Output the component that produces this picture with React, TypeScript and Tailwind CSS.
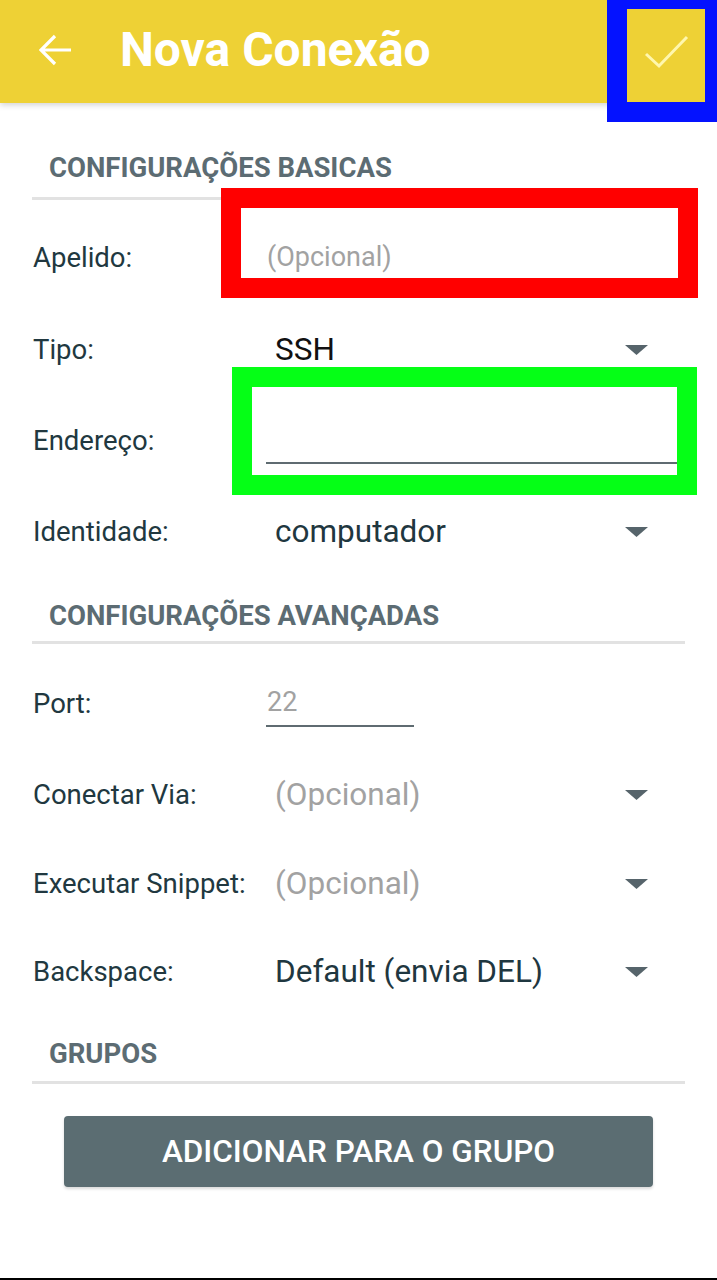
import React from "react";

const font = { fontFamily: "Roboto, 'Liberation Sans', sans-serif" };

// small dropdown triangle used by the spinners
const Caret = () => (
  <svg width="23" height="10" viewBox="0 0 23 10" className="shrink-0">
    <path d="M0 0 L23 0 L11.5 10 Z" fill="#56646b" />
  </svg>
);

const SectionTitle = ({ children, className }: { children: React.ReactNode; className?: string }) => (
  <div className={className}>
    <div className="pl-[49px] text-[27.5px] leading-[30px] font-bold text-[#5c6c73]">{children}</div>
  </div>
);

const Divider = ({ className }: { className?: string }) => (
  <div className={"mx-[32px] h-[3px] bg-[#e2e2e2] " + (className ?? "")} />
);

const Row = ({
  label,
  height,
  children,
}: {
  label: string;
  height: string;
  children: React.ReactNode;
}) => (
  <div className={"flex items-center pl-[33px] pr-[32px] " + height}>
    <div className="w-[233px] shrink-0 text-[27.5px] text-[#213840]">{label}</div>
    <div className="flex-1 h-full flex items-center">{children}</div>
  </div>
);

const Spinner = ({ value, muted, dark }: { value: string; muted?: boolean; dark?: boolean }) => (
  <div className="flex-1 flex items-center justify-between pl-[9px] pr-[37px]">
    <span
      className={
        "text-[31.5px] leading-none " +
        (muted ? "text-[#a2a2a2]" : dark ? "text-[#111111]" : "text-[#1f3740]")
      }
    >
      {value}
    </span>
    <Caret />
  </div>
);

export default function App() {
  return (
    <div className="relative w-[717px] h-[1280px] overflow-hidden bg-white" style={font}>
      {/* toolbar */}
      <header className="relative z-10 h-[103px] bg-[#eed135] flex items-center shadow-[0_2px_6px_rgba(0,0,0,0.18)]">
        <svg width="34" height="32" viewBox="0 0 34 32" className="ml-[39px] mb-[4px]">
          <path d="M32 16 H3 M16 2 L2 16 L16 30" fill="none" stroke="#fff" strokeWidth="3.2" />
        </svg>
        <h1 className="ml-[47px] mb-[4px] text-[48px] font-bold text-white leading-none">Nova Conexão</h1>
        <div className="ml-auto w-[78px] h-full flex items-center justify-center mr-[12px]">
          <svg width="48" height="38" viewBox="0 0 48 38">
            <path d="M4 21 L17 33 L45 4" fill="none" stroke="#fff7ad" strokeWidth="3" />
          </svg>
        </div>
      </header>

      <SectionTitle className="pt-[50px]">CONFIGURAÇÕES BASICAS</SectionTitle>
      <Divider className="mt-[14px]" />

      <div className="pt-[12px]">
        <Row label="Apelido:" height="h-[92px]">
          <div className="flex-1 h-[46px] border-b border-[#c8c8c8] flex items-center">
            <span className="pl-[1px] text-[27px] text-[#a2a2a2]">(Opcional)</span>
          </div>
        </Row>
        <Row label="Tipo:" height="h-[91px]">
          <Spinner value="SSH" dark />
        </Row>
        <Row label="Endereço:" height="h-[91px]">
          <div className="flex-1 h-[46px] border-b-2 border-[#5f6b71]" />
        </Row>
        <Row label="Identidade:" height="h-[91px]">
          <Spinner value="computador" />
        </Row>
      </div>

      <SectionTitle className="pt-[24px]">CONFIGURAÇÕES AVANÇADAS</SectionTitle>
      <Divider className="mt-[10px]" />

      <div className="pt-[14px]">
        <Row label="Port:" height="h-[91px]">
          <div className="w-[148px] h-[46px] border-b-2 border-[#5f6b71] flex items-center">
            <span className="pl-[1px] text-[27px] text-[#a2a2a2]">22</span>
          </div>
        </Row>
        <Row label="Conectar Via:" height="h-[91px]">
          <Spinner value="(Opcional)" muted />
        </Row>
        <Row label="Executar Snippet:" height="h-[88px]">
          <Spinner value="(Opcional)" muted />
        </Row>
        <Row label="Backspace:" height="h-[87px]">
          <Spinner value="Default (envia DEL)" />
        </Row>
      </div>

      <SectionTitle className="pt-[24px]">GRUPOS</SectionTitle>
      <Divider className="mt-[12px]" />

      <div className="px-[64px] pt-[32px]">
        <button className="w-[589px] h-[71px] rounded-[4px] bg-[#5b6d72] text-white text-[31.5px] font-medium shadow-[0_2px_3px_rgba(0,0,0,0.15)]">
          ADICIONAR PARA O GRUPO
        </button>
      </div>

      {/* annotation frames drawn over the screenshot */}
      <div className="absolute left-[607px] top-[-11px] w-[118px] h-[133px] border-[20px] border-[#0412ff] z-20" />
      <div className="absolute left-[221px] top-[188px] w-[477px] h-[110px] border-[20px] border-[#ff0000] z-20" />
      <div className="absolute left-[232px] top-[367px] w-[465px] h-[128px] border-[20px] border-[#05ff16] z-20" />

      {/* bottom edge of the capture */}
      <div className="absolute left-0 right-0 bottom-0 h-[2px] bg-black" />
    </div>
  );
}
